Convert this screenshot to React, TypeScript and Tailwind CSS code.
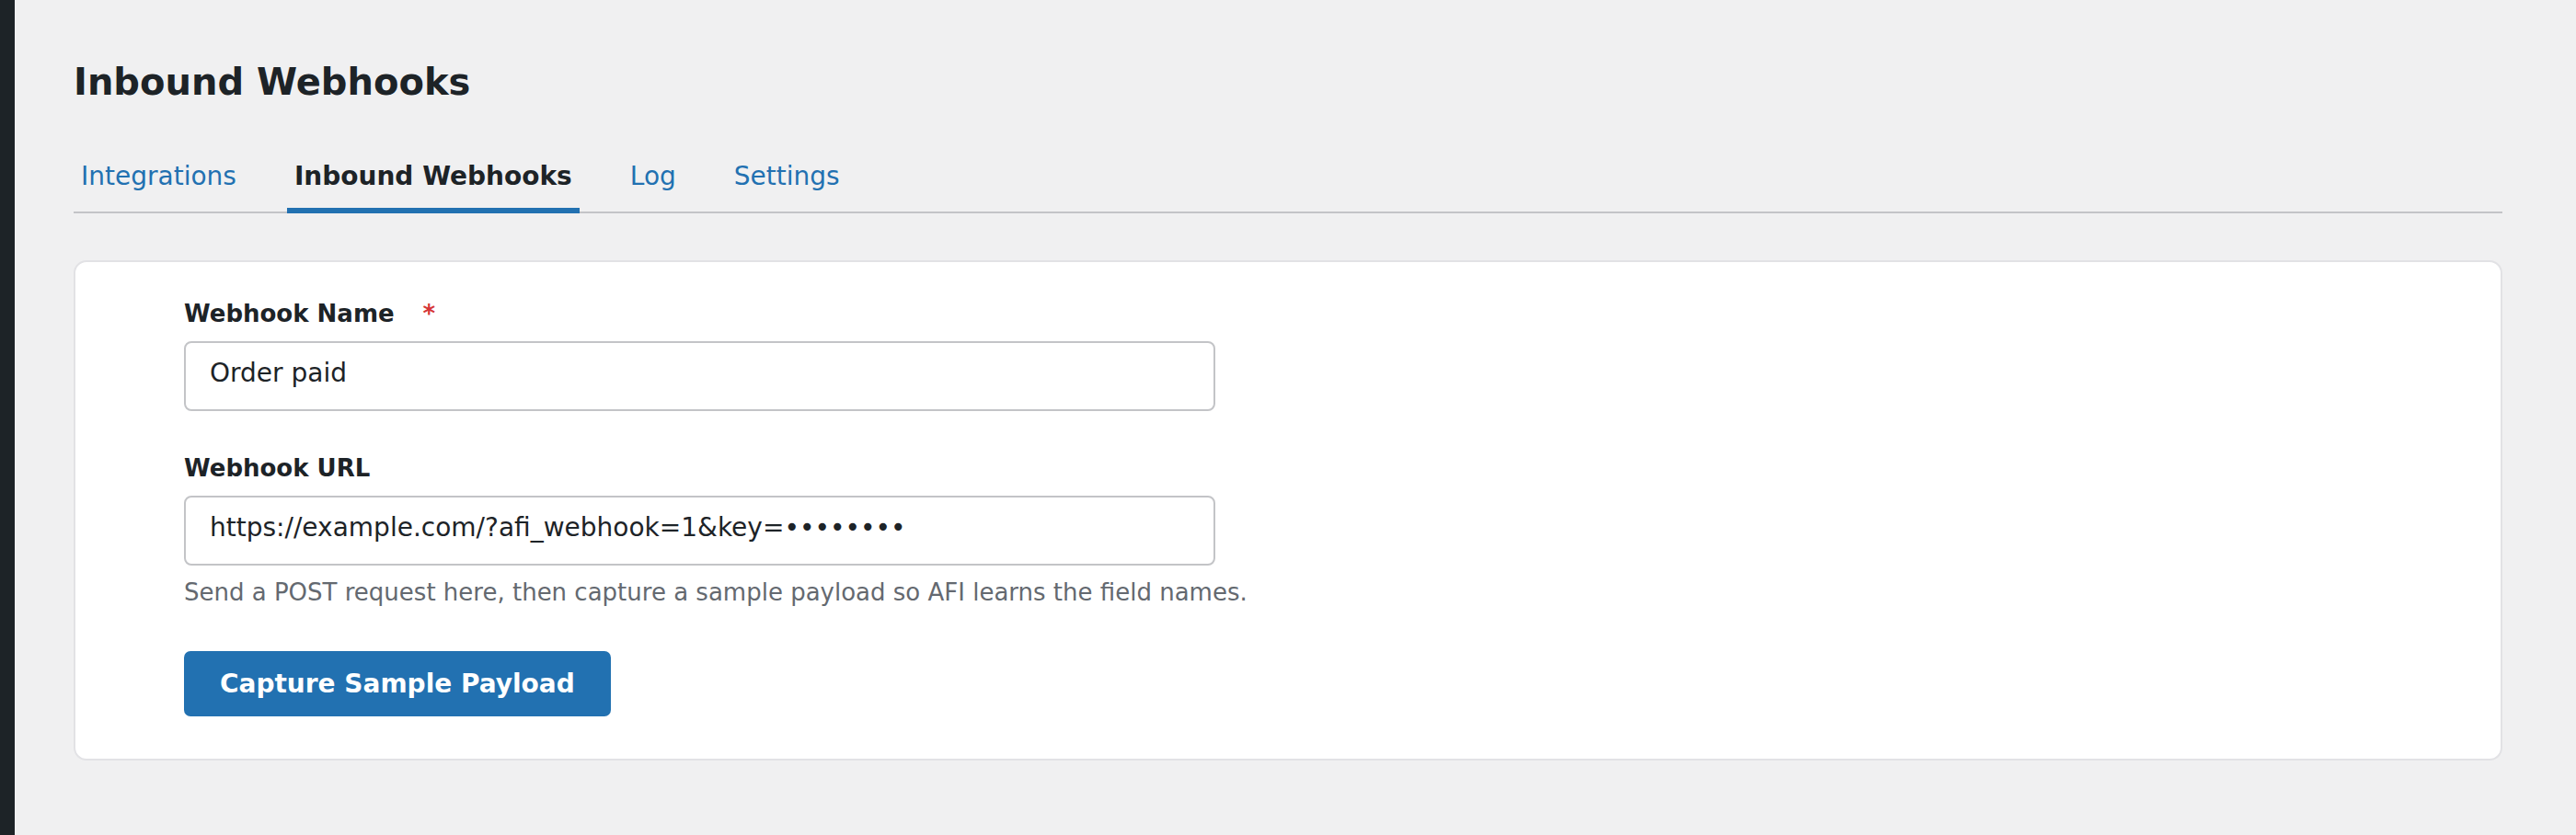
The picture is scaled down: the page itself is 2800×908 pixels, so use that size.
import { useState } from 'react';

const tabs = ['Integrations', 'Inbound Webhooks', 'Log', 'Settings'];

export default function App() {
  const [active, setActive] = useState('Inbound Webhooks');
  const [name, setName] = useState('Order paid');
  const url = 'https://example.com/?afi_webhook=1&key=••••••••';

  return (
    <div className="flex min-h-screen bg-[#f0f0f1] text-[#1d2327]" style={{ fontFamily: '"DejaVu Sans", sans-serif' }}>
      {/* admin sidebar edge */}
      <div className="w-[16px] shrink-0 bg-[#1d2327]" />

      <main className="flex-1 pl-[64px] pr-[80px] pt-[63px]">
        <h1 className="text-[40px] leading-[52px] font-bold">Inbound Webhooks</h1>

        {/* Tabs */}
        <nav className="mt-[57px] flex gap-[47px] border-b-2 border-[#c3c4c7]">
          {tabs.map((t) => (
            <button
              key={t}
              onClick={() => setActive(t)}
              className={
                t === active
                  ? 'px-[8px] pb-[14px] text-[28px] leading-[40px] font-bold text-[#1d2327] border-b-[6px] border-[#2271b1] -mb-[2px]'
                  : 'px-[8px] pb-[14px] text-[28px] leading-[40px] text-[#2271b1] border-b-[6px] border-transparent -mb-[2px]'
              }
            >
              {t}
            </button>
          ))}
        </nav>

        {/* Form card */}
        <div className="mt-[51px] bg-white border-2 border-[#e2e2e5] rounded-[14px] pl-[118px] pt-[38px] pb-[46px]">
          <label className="block text-[26px] leading-[36px] font-bold">
            Webhook Name<span className="ml-[31px] text-[#d63638]">*</span>
          </label>
          <input
            value={name}
            onChange={(e) => setName(e.target.value)}
            className="mt-[12px] block w-[1121px] border-2 border-[#c3c4c7] rounded-[8px] bg-white pl-[26px] pr-[20px] pt-[17px] pb-[23px] text-[28px] leading-[32px] text-[#1d2327] outline-none"
          />

          <label className="mt-[44px] block text-[26px] leading-[36px] font-bold">Webhook URL</label>
          <input
            readOnly
            value={url}
            className="mt-[12px] block w-[1121px] border-2 border-[#c3c4c7] rounded-[8px] bg-white pl-[26px] pr-[20px] pt-[17px] pb-[23px] text-[28px] leading-[32px] text-[#1d2327] outline-none"
          />
          <p className="mt-[11px] text-[26px] leading-[36px] text-[#646970]">
            Send a POST request here, then capture a sample payload so AFI learns the field names.
          </p>

          <button className="mt-[46px] rounded-[7px] bg-[#2271b1] px-[39px] py-[19px] text-[28px] leading-[33px] font-bold text-white">
            Capture Sample Payload
          </button>
        </div>
      </main>
    </div>
  );
}
